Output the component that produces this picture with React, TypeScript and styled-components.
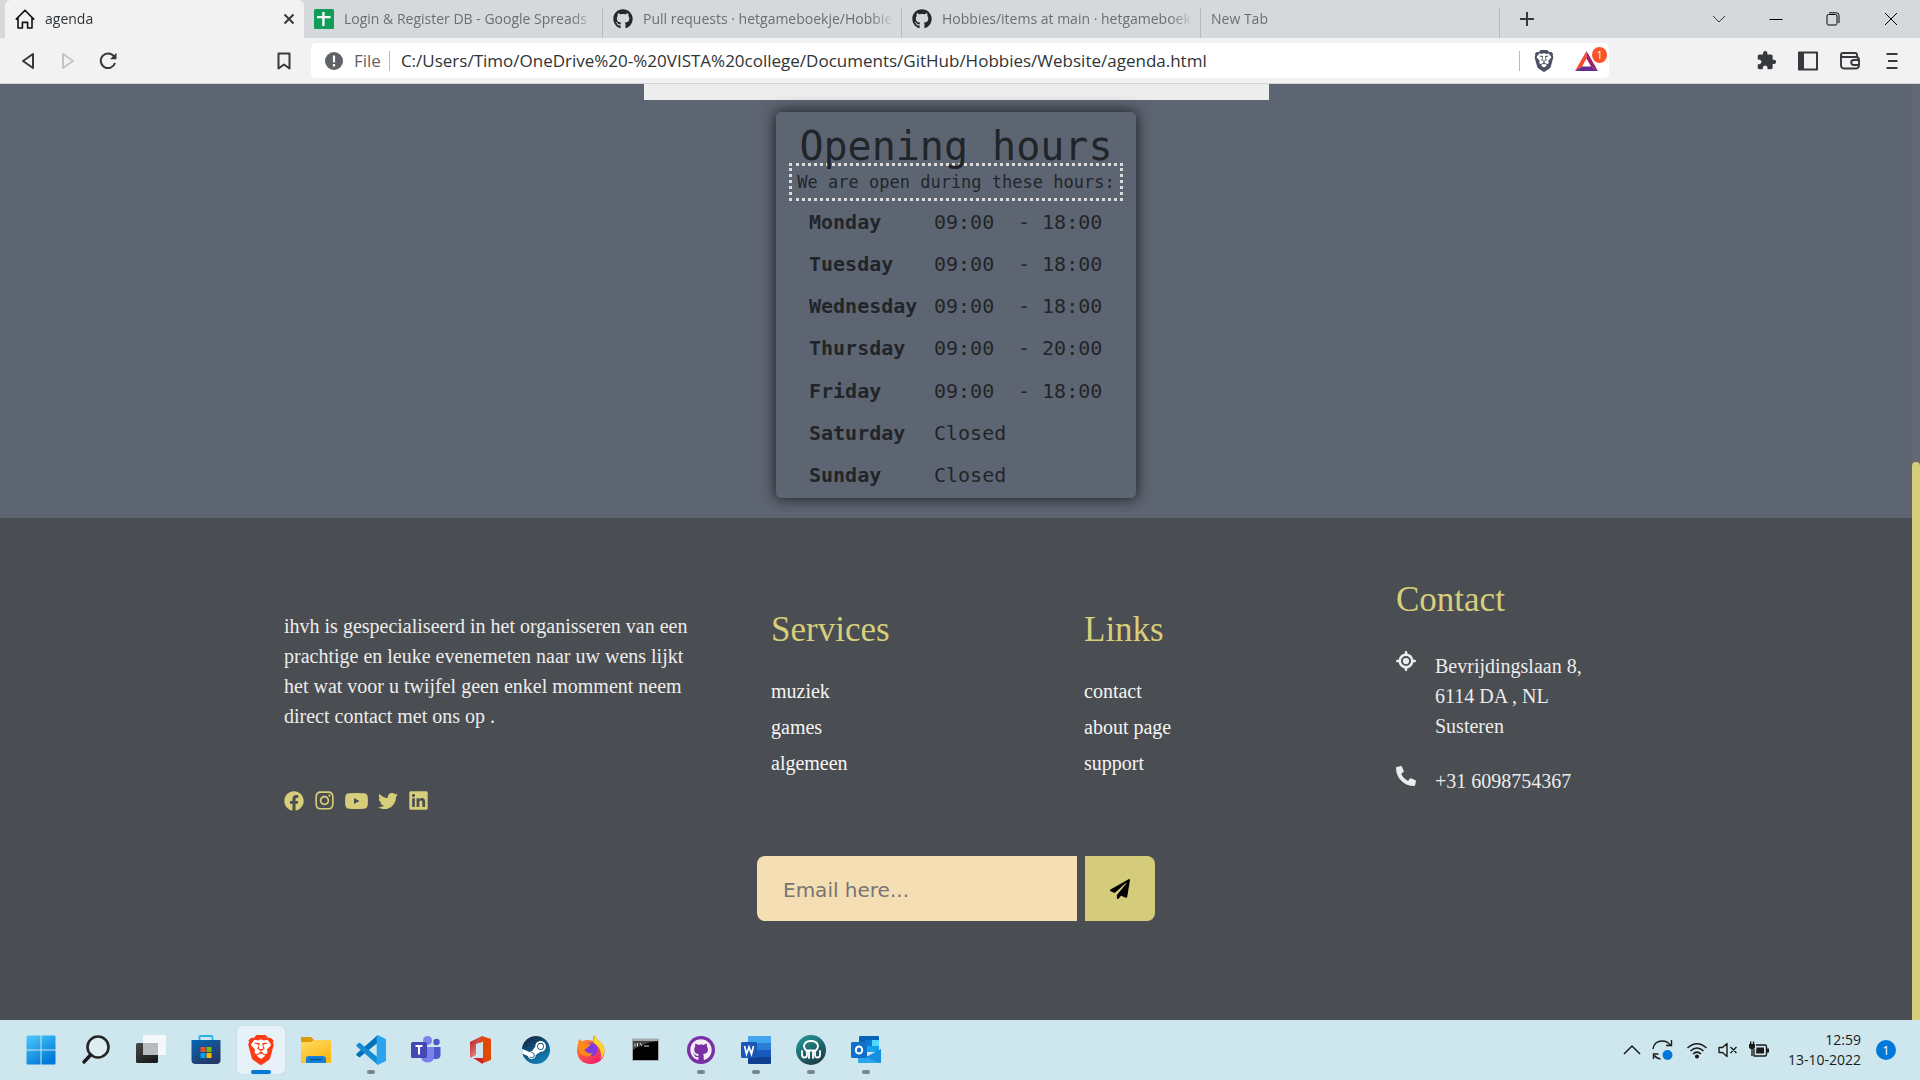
import React from 'react';
import styled, { createGlobalStyle, css } from 'styled-components';
import {
  FaFacebook,
  FaInstagram,
  FaTwitter,
  FaLinkedin,
  FaPaperPlane,
  FaGithub,
  FaSteam,
  FaPhoneAlt,
} from 'react-icons/fa';
import { FaLocationCrosshairs } from 'react-icons/fa6';
import { MdExtension } from 'react-icons/md';
import { SiBrave } from 'react-icons/si';

const sans = `"Open Sans", "Noto Sans", sans-serif`;
const serif = `"Liberation Serif", "Times New Roman", serif`;
const mono = `"DejaVu Sans Mono", monospace`;
const gold = '#d6ce7b';
const ink = '#35393d';

const GlobalStyle = createGlobalStyle`
  *, *::before, *::after { box-sizing: border-box; }
  body { margin: 0; background: #4a4d51; }
  h1, h2, p, ul { margin: 0; padding: 0; }
  ul { list-style: none; }
  button { border: 0; padding: 0; background: none; font: inherit; color: inherit; cursor: pointer; }
  svg { display: block; flex: none; }
`;

const Desktop = styled.div`
  display: flex;
  flex-direction: column;
  min-height: 100vh;
  font-family: ${sans};
`;

/* ---------- browser chrome ---------- */

const TabStrip = styled.div`
  display: flex;
  align-items: stretch;
  height: 38px;
  padding-left: 5px;
  background: #d5d9dc;
`;

const Tab = styled.div<{ $active?: boolean }>`
  display: flex;
  align-items: center;
  gap: 10px;
  flex: 0 1 299px;
  min-width: 0;
  padding: 0 6px 0 10px;
  font-size: 14px;
  color: #6a6f74;
  border-right: 1px solid transparent;
  border-image: linear-gradient(transparent 9px, #b5b9bc 9px) 1;
  ${(p) =>
    p.$active &&
    css`
      background: #f2f2f2;
      color: #2f3337;
      border: 0;
      border-image: none;
      border-radius: 6px 6px 0 0;
      padding-right: 9px;
    `}
`;

const TabTitle = styled.span`
  flex: 1;
  overflow: hidden;
  white-space: nowrap;
  line-height: 20px;
  mask-image: linear-gradient(to left, transparent, #000 24px);
`;

const IconButton = styled.button<{ $w?: number }>`
  display: flex;
  align-items: center;
  justify-content: center;
  width: ${(p) => p.$w ?? 40}px;
  color: ${ink};
`;

const CloseTab = styled(IconButton)`
  width: 12px;
`;

const WindowControls = styled.div`
  display: flex;
  margin-left: auto;
`;

const Toolbar = styled.div`
  display: flex;
  align-items: center;
  height: 46px;
  background: #f2f2f2;
  border-bottom: 1px solid #d2d4d6;
`;

const NavGroup = styled.nav`
  display: flex;
  width: 311px;
  padding: 0 7px 0 8px;
`;

const BookmarkButton = styled(IconButton)`
  margin-left: auto;
`;

const AddressBar = styled.div`
  display: flex;
  align-items: center;
  flex: 1;
  height: 35px;
  padding: 0 11px 0 14px;
  border-radius: 5px;
  background: #fff;
  color: #5f6368;
  font-size: 17px;
`;

const Scheme = styled.span`
  padding: 0 8px 0 11px;
`;

const Divider = styled.span`
  width: 1px;
  height: 20px;
  background: #b9bcbf;
`;

const AddressInput = styled.input`
  flex: 1;
  min-width: 0;
  height: 30px;
  margin-left: 11px;
  padding: 0;
  border: 0;
  outline: 0;
  background: none;
  font: 17px ${sans};
  color: #303336;
`;

const RewardButton = styled.button`
  position: relative;
  margin-left: 20px;
`;

const RewardCount = styled.span`
  position: absolute;
  top: -4px;
  right: -9px;
  width: 15px;
  height: 16px;
  border-radius: 50%;
  background: #fb542b;
  color: #fff;
  font-size: 10px;
  line-height: 16px;
  text-align: center;
`;

const ShieldButton = styled.button`
  margin-left: 13px;
  color: #4c5064;
`;

const ToolGroup = styled.div`
  display: flex;
  justify-content: flex-end;
  width: 311px;
  padding-right: 7px;
`;

/* ---------- web page ---------- */

const Viewport = styled.div`
  display: flex;
  flex: 1;
`;

const Page = styled.div`
  display: flex;
  flex-direction: column;
  flex: 1;
  min-width: 0;
`;

const ScrollTrack = styled.div`
  display: grid;
  grid-template-rows: 378fr 558fr;
  width: 8px;
  background: #646872;
`;

const ScrollThumb = styled.div`
  grid-row: 2;
  border-radius: 5px 5px 0 0;
  background: ${gold};
`;

const Main = styled.main`
  display: flex;
  flex-direction: column;
  align-items: center;
  gap: 12px;
  padding-bottom: 20px;
  background: #5e6572;
`;

const CalendarEdge = styled.div`
  width: 625px;
  height: 16px;
  background: #ededed;
`;

const HoursCard = styled.section`
  width: 360px;
  padding: 18px 13px 2px;
  border-radius: 5px;
  box-shadow: 0 0 14px 1px #1d1f22;
  background: #5e6572;
  color: #212529;
  font-family: ${mono};
`;

const HoursTitle = styled.h1`
  font-size: 40px;
  font-weight: 400;
  line-height: 33px;
  text-align: center;
`;

const HoursNote = styled.p`
  height: 38px;
  border: 3px dotted #dcdcdc;
  font-size: 17px;
  line-height: 32px;
  text-align: center;
  white-space: nowrap;
`;

const HoursTable = styled.table`
  width: 305px;
  height: 295px;
  margin: 0 auto 0 20px;
  border-collapse: collapse;
  font-size: 20px;
  line-height: 30px;

  th, td { padding: 0; text-align: left; white-space: nowrap; }
  th { width: 125px; }
  td + td { width: 96px; }
`;

const Footer = styled.footer`
  flex: 1;
  padding: 60px 24px 96px;
  background: #4a4d51;
  color: #ececec;
  font: 20px/30px ${serif};
`;

const FooterGrid = styled.div`
  display: grid;
  grid-template-columns: 487fr 313fr 312fr 232fr;
  max-width: 1344px;
  margin: 0 auto;
`;

const About = styled.section`
  padding: 33px 72px 0 0;
`;

const LinkColumn = styled.section`
  padding-top: 30px;
`;

const FooterHeading = styled.h2`
  color: ${gold};
  font-size: 35px;
  font-weight: 400;
  line-height: 44px;
`;

const LinkList = styled.ul`
  display: flex;
  flex-direction: column;
  gap: 6px;
  margin-top: 24px;
`;

const FooterLink = styled.a`
  color: #f5f5f5;
  text-decoration: none;
`;

const SocialRow = styled.div`
  display: flex;
  align-items: center;
  gap: 10px;
  height: 21px;
  margin-top: 59px;
`;

const SocialLink = styled.a`
  color: ${gold};
`;

const ContactList = styled.ul`
  display: flex;
  flex-direction: column;
  gap: 25px;
  margin-top: 29px;
`;

const ContactItem = styled.li`
  display: flex;
  gap: 19px;
`;

const ContactText = styled.span`
  max-width: 160px;
`;

const Newsletter = styled.form`
  display: flex;
  justify-content: center;
  gap: 8px;
  margin-top: 45px;
`;

const EmailInput = styled.input`
  width: 320px;
  height: 65px;
  padding: 2px 26px 0;
  border: 0;
  border-radius: 8px 0 0 8px;
  background: #f5deb3;
  color: #333;
  font: 20px "DejaVu Sans", sans-serif;
  &::placeholder { color: #757575; opacity: 1; }
`;

const SendButton = styled.button`
  display: flex;
  align-items: center;
  justify-content: center;
  width: 70px;
  height: 65px;
  border-radius: 0 8px 8px 0;
  background: #d4cc7b;
  color: #000;
`;

/* ---------- taskbar ---------- */

const Taskbar = styled.div`
  display: flex;
  align-items: center;
  justify-content: space-between;
  height: 60px;
  padding: 0 24px 0 13px;
  background: #cee6ed;
  color: #1b1b1b;
`;

const AppRow = styled.div`
  display: flex;
  gap: 7px;
  padding-left: 4px;
`;

const AppButton = styled.button<{ $state?: 'active' | 'open' }>`
  display: flex;
  align-items: center;
  justify-content: center;
  position: relative;
  width: 48px;
  height: 48px;
  border-radius: 5px;
  ${(p) => p.$state === 'active' && css`background: #e6f2f7; box-shadow: 0 0 1px #9fb5bd;`}
  ${(p) =>
    p.$state &&
    css`
      &::after {
        content: '';
        position: absolute;
        bottom: 0;
        width: ${p.$state === 'active' ? 20 : 8}px;
        height: 4px;
        border-radius: 2px;
        background: ${p.$state === 'active' ? '#0078d7' : '#7a868b'};
      }
    `}
`;

const Tray = styled.div`
  display: flex;
  align-items: center;
  gap: 12px;
`;

const TrayIcons = styled.div`
  display: flex;
  align-items: center;
  gap: 11px;
`;

const Clock = styled.time`
  width: 80px;
  font-size: 14px;
  line-height: 20px;
  text-align: right;
`;

const NoticeCount = styled.span`
  width: 20px;
  height: 20px;
  margin-left: 3px;
  border-radius: 50%;
  background: #0078d7;
  color: #fff;
  font-size: 13px;
  line-height: 20px;
  text-align: center;
`;

/* ---------- drawings ---------- */

type LineProps = { w?: number; h?: number; box: string; sw?: number; color?: string; children: React.ReactNode };
const Line = ({ w = 20, h = 20, box, sw = 2, color = 'currentColor', children }: LineProps) => (
  <svg width={w} height={h} viewBox={box} fill="none" stroke={color} strokeWidth={sw} strokeLinejoin="round" aria-hidden="true">
    {children}
  </svg>
);

const HomeIcon = () => (
  <Line box="0 0 20 20" sw={1.6} color="#111">
    <path d="M.8 10.6 10 1.2l9.2 9.4M3 9v10h4.4v-5.6h5.2V19H17V9" />
  </Line>
);

const SheetsIcon = () => (
  <svg width="20" height="20" viewBox="0 0 20 20" aria-hidden="true">
    <rect width="20" height="20" rx="1.5" fill="#0f9d58" />
    <path d="M8.2 3h2.4v4h6v2.2h-6V17H8.2V9.200H3V7h5.200z" fill="#fff" />
  </svg>
);

const BatIcon = () => (
  <svg width="23" height="20" viewBox="0 0 23 20" aria-hidden="true">
    <path d="M11.500 0 0 20l7-4.500 4.500-8z" fill="#ff4724" />
    <path d="M11.500 0 23 20l-7-4.500-4.500-8z" fill="#9e1f63" />
    <path d="M0 20h23l-7-4.500H7z" fill="#662d91" />
  </svg>
);

const YoutubeIcon = () => (
  <svg width="23" height="16" viewBox="0 0 23 16" fill="currentColor" fillRule="evenodd" aria-hidden="true">
    <path d="M4 .3Q11.500-.3 19 .3 22.300.4 22.700 4q.4 4 0 8-.4 3.600-3.700 3.700-7.500.6-15 0Q.7 15.600.3 12q-.4-4 0-8Q.7.4 4 .3ZM9 5v6L14.400 8Z" />
  </svg>
);

const App30 = ({ children }: { children: React.ReactNode }) => (
  <svg width="30" height="30" viewBox="0 0 30 30" aria-hidden="true">{children}</svg>
);

const Gradient = ({ id, from, to }: { id: string; from: string; to: string }) => (
  <linearGradient id={id} x1="0" y1="0" x2="0.6" y2="1">
    <stop stopColor={from} />
    <stop offset="1" stopColor={to} />
  </linearGradient>
);

const apps: { name: string; state?: 'active' | 'open'; art: React.ReactNode }[] = [
  {
    name: 'Start',
    art: (
      <>
        <Gradient id="win" from="#4ccbfb" to="#0078d7" />
        <path fill="url(#win)" d="M.5 1.500q0-1 1-1h13v14H.5zM15.500.5h13q1 0 1 1v13h-14zM.5 15.500h14v14h-13q-1 0-1-1zM15.500 15.500h14v13q0 1-1 1h-13z" />
      </>
    ),
  },
  {
    name: 'Search',
    art: (
      <>
        <circle cx="17" cy="12" r="10.500" fill="#dfeef3" stroke="#262626" strokeWidth="2.600" />
        <path d="m9.500 20-6.500 7" stroke="#1d1d1d" strokeWidth="3.400" strokeLinecap="round" />
      </>
    ),
  },
  {
    name: 'Task view',
    art: (
      <>
        <Gradient id="tv" from="#4a4a4a" to="#1c1c1c" />
        <rect y="8" width="22" height="20" rx="1.500" fill="url(#tv)" />
        <rect x="7" y="0" width="23" height="20" rx="1.500" fill="#f5f7f8" />
        <path d="M7 8h15v12H8q-1 0-1-1z" fill="#b9bbbc" />
      </>
    ),
  },
  {
    name: 'Microsoft Store',
    art: (
      <>
        <Gradient id="store" from="#0667b5" to="#25386a" />
        <path d="M8.500 5V2q0-1 1-1h11q1 0 1 1v3" fill="none" stroke="#22b6ee" strokeWidth="1.800" />
        <path d="M.5 5h29v20q0 4-4 4h-21q-4 0-4-4z" fill="url(#store)" />
        <path d="M9.500 12h5v5h-5z" fill="#f25022" />
        <path d="M15.500 12h5v5h-5z" fill="#7fba00" />
        <path d="M9.500 18h5v5h-5z" fill="#00a4ef" />
        <path d="M15.500 18h5v5h-5z" fill="#ffb900" />
      </>
    ),
  },
  {
    name: 'Brave',
    state: 'active',
    art: (
      <>
        <path d="M7 4h16l2 6-2 10-8 7-8-7-2-10z" fill="#fff" />
        <SiBrave size={30} color="#fb3c14" />
      </>
    ),
  },
  {
    name: 'File Explorer',
    art: (
      <>
        <Gradient id="folder" from="#ffdb63" to="#fbb917" />
        <path d="M0 3q0-1 1-1h9l3 3v4H0z" fill="#dd9a07" />
        <path d="M0 7h10l3-2h16q1 0 1 1v22H0z" fill="url(#folder)" />
        <path d="M5 28v-4q0-3 3-3h14q3 0 3 3v4z" fill="#1580d4" />
        <path d="M9 24.500h12" stroke="#0b559c" strokeWidth="1.500" />
      </>
    ),
  },
  {
    name: 'Visual Studio Code',
    state: 'open',
    art: (
      <>
        <path d="M22 7.500 3.500 22.500.8 20.600q-1-1 0-2L21.500.3z" fill="#0073b7" />
        <path d="M22 22.500 3.500 7.500.8 9.400q-1 1 0 2L21.500 29.700z" fill="#168bd3" />
        <path d="M21.500 0 29 3.500q1 .5 1 1.500v20q0 1-1 1.500L21.500 30q-.8-.2-.8-1.500v-27Q20.700.2 21.500 0z" fill="#2aa4ef" />
      </>
    ),
  },
  {
    name: 'Microsoft Teams',
    art: (
      <>
        <circle cx="16.500" cy="5.500" r="4.500" fill="#7b83eb" />
        <circle cx="25.500" cy="7" r="3.200" fill="#5059c9" />
        <path d="M21 12h8.500v8q0 4-4.500 4h-4z" fill="#5059c9" />
        <path d="M10 12h13v9q0 6.500-6.500 6.500T10 21z" fill="#7b83eb" />
        <rect x="0" y="7" width="16" height="16" rx="1.500" fill="#4248b4" />
        <path d="M4.500 11h7M8 11v8.500" stroke="#fff" strokeWidth="2" />
      </>
    ),
  },
  {
    name: 'Office',
    art: (
      <>
        <Gradient id="office" from="#b5150e" to="#e88f96" />
        <path d="M4 7 16 1v6l-6 2v11l-6 3z" fill="url(#office)" />
        <path d="m16 1 9 3v21l-9 3.500-8-5.500 9 1V6.500L13 8z" fill="#e04a09" />
        <path d="M7 23h10v5.500h-1z" fill="#cf242a" />
      </>
    ),
  },
  {
    name: 'Steam',
    art: (
      <>
        <circle cx="15" cy="15" r="13" fill="#fff" />
        <Gradient id="steam" from="#111d3a" to="#1380b6" />
        <FaSteam x={0.5} y={0.5} size={29} fill="url(#steam)" />
      </>
    ),
  },
  {
    name: 'Firefox',
    art: (
      <>
        <Gradient id="fox" from="#ffa21a" to="#f3206b" />
        <path d="M17 2q2-2 2-2 .5 3 4 6 6 5 5.500 11Q27 28.500 15 29 2 28.500 1 16q0-5 1.500-8.500L3 4l3 2.500Q11 4 17 6z" fill="url(#fox)" />
        <path d="M19 0q.5 3 4 6 6 5 5.500 11-1 5-4 7.500Q27 14 19 9q-3-3 0-9z" fill="#ffd32b" />
        <circle cx="15" cy="14.500" r="6.800" fill="#8139e0" />
        <path d="M3 4q2 3 5 4l7 1-4 4-3 2q5 5 9 3-5 7-13 0Q1 12 3 4z" fill="#ff8b16" />
      </>
    ),
  },
  {
    name: 'Command Prompt',
    art: (
      <>
        <rect x="1" y="3.500" width="27" height="22.500" rx="1" fill="#a3a9ac" />
        <path d="M2 6h25v19H2z" fill="#000" />
        <path d="M2 6h25Q12 8 2 15z" fill="#454545" />
        <path d="M4 8.500v3M6.500 8v3.500M9 8l2 3M13 11h5" stroke="#ddd" />
      </>
    ),
  },
  {
    name: 'GitHub Desktop',
    state: 'open',
    art: (
      <>
        <circle cx="15" cy="15" r="14" fill="#7a2fa5" />
        <FaGithub x={4} y={4} size={22} color="#f3eef6" />
      </>
    ),
  },
  {
    name: 'Word',
    state: 'open',
    art: (
      <>
        <path d="M7 2q0-1 1-1h21q1 0 1 1v6H7z" fill="#41a5ee" />
        <path d="M7 8h23v7H7z" fill="#2b7cd3" />
        <path d="M7 15h23v7H7z" fill="#185abd" />
        <path d="M7 22h23v6q0 1-1 1H8q-1 0-1-1z" fill="#103f91" />
        <rect y="7" width="16" height="16" rx="1.500" fill="#1a57b5" />
        <path d="m3.500 11 2 8L8 12l2.500 7 2-8" fill="none" stroke="#fff" strokeWidth="1.700" />
      </>
    ),
  },
  {
    name: 'GitKraken',
    state: 'open',
    art: (
      <>
        <Gradient id="kraken" from="#24a09b" to="#1c3f4b" />
        <circle cx="15" cy="15" r="15" fill="url(#kraken)" />
        <path d="M10.500 15.500Q8 14 8 10.500 9 6 15 6t7 4.500q0 3.500-2.500 5M10 15.500h10M6 16v4q0 2.500 2.500 2.500T11 20v-4M13 16.500V23M17 16.500V23M19 16v4q0 2.500 2.500 2.500T24 20v-4" fill="none" stroke="#fff" strokeWidth="1.800" strokeLinecap="round" />
      </>
    ),
  },
  {
    name: 'Outlook',
    state: 'open',
    art: (
      <>
        <path d="M8 2q0-1 1-1h18q1 0 1 1v15H8z" fill="#0364b8" />
        <path d="M14 5h7v6h-7z" fill="#0f78d4" />
        <path d="M21 5h7v6h-7z" fill="#50d9ff" />
        <path d="M14 11h14v6H14z" fill="#14a1e8" />
        <path d="m7 17 12 5 11-8v13q0 1-1 1H8q-1 0-1-1z" fill="#28a8ea" />
        <path d="m30 14-15 8 13 6q2 0 2-1z" fill="#1490df" />
        <rect y="7" width="16" height="16" rx="1.500" fill="#0f6fc9" />
        <ellipse cx="8" cy="15" rx="3.200" ry="3.600" fill="none" stroke="#fff" strokeWidth="2" />
      </>
    ),
  },
];

const tabs = [
  { title: 'Login & Register DB - Google Spreads', icon: <SheetsIcon /> },
  { title: 'Pull requests · hetgameboekje/Hobbie', icon: <FaGithub size={20} color="#24292f" /> },
  { title: 'Hobbies/items at main · hetgameboek', icon: <FaGithub size={20} color="#24292f" /> },
  { title: 'New Tab', icon: null },
];

const hours: [string, string, string?][] = [
  ['Monday', '09:00', '- 18:00'],
  ['Tuesday', '09:00', '- 18:00'],
  ['Wednesday', '09:00', '- 18:00'],
  ['Thursday', '09:00', '- 20:00'],
  ['Friday', '09:00', '- 18:00'],
  ['Saturday', 'Closed'],
  ['Sunday', 'Closed'],
];

const socials = [
  { name: 'Facebook', icon: <FaFacebook size={20} /> },
  { name: 'Instagram', icon: <FaInstagram size={21} width={19} /> },
  { name: 'YouTube', icon: <YoutubeIcon /> },
  { name: 'Twitter', icon: <FaTwitter size={20} /> },
  { name: 'LinkedIn', icon: <FaLinkedin size={21} width={19} /> },
];

const Links = ({ title, items }: { title: string; items: string[] }) => (
  <LinkColumn>
    <FooterHeading>{title}</FooterHeading>
    <LinkList>
      {items.map((item) => (
        <li key={item}><FooterLink href="#">{item}</FooterLink></li>
      ))}
    </LinkList>
  </LinkColumn>
);

const BrowserChrome = () => (
  <header>
    <TabStrip>
      <Tab $active>
        <HomeIcon />
        <TabTitle>agenda</TabTitle>
        <CloseTab aria-label="Close tab">
          <Line w={12} h={12} box="0 0 12 12"><path d="m1.500 1.500 9 9m0-9-9 9" /></Line>
        </CloseTab>
      </Tab>
      {tabs.map((tab) => (
        <Tab key={tab.title}>
          {tab.icon}
          <TabTitle>{tab.title}</TabTitle>
        </Tab>
      ))}
      <IconButton $w={54} aria-label="New tab">
        <Line w={16} h={16} box="0 0 16 16"><path d="M8 1v14M1 8h14" /></Line>
      </IconButton>
      <WindowControls>
        <IconButton $w={57} aria-label="Search tabs">
          <Line w={14} h={14} box="0 0 14 14" sw={1}><path d="m1 4 6 6 6-6" /></Line>
        </IconButton>
        <IconButton $w={57} aria-label="Minimize">
          <Line w={14} h={14} box="0 0 14 14" sw={1} color="#000"><path d="M.5 7.500h13" /></Line>
        </IconButton>
        <IconButton $w={57} aria-label="Restore">
          <Line w={14} h={14} box="0 0 14 14" sw={1} color="#000">
            <rect x="1" y="2.500" width="10" height="10.500" rx="1.500" />
            <path d="M3 .8h7.500q2.500 0 2.500 2.500V11" />
          </Line>
        </IconButton>
        <IconButton $w={59} aria-label="Close window">
          <Line w={14} h={14} box="0 0 14 14" sw={1} color="#000"><path d="m1 1 12 12m0-12L1 13" /></Line>
        </IconButton>
      </WindowControls>
    </TabStrip>
    <Toolbar>
      <NavGroup>
        <IconButton aria-label="Back">
          <Line w={16} h={18} box="0 0 16 18"><path d="M13 2v14L3 9z" /></Line>
        </IconButton>
        <IconButton aria-label="Forward">
          <Line w={16} h={18} box="0 0 16 18" color="#c2c4c6"><path d="M3 2v14l10-7z" /></Line>
        </IconButton>
        <IconButton aria-label="Reload">
          <Line w={18} h={18} box="0 0 18 18">
            <path d="M15 4.500A7.300 7.300 0 1 0 16 11" />
            <path d="M17.500.8v6.400H11z" fill={ink} stroke="none" />
          </Line>
        </IconButton>
        <BookmarkButton aria-label="Bookmark">
          <Line w={14} h={18} box="0 0 14 18"><path d="M1.500 1.500h11v15L7 12.500l-5.500 4z" /></Line>
        </BookmarkButton>
      </NavGroup>
      <AddressBar>
        <svg width="18" height="18" viewBox="0 0 18 18" aria-hidden="true">
          <circle cx="9" cy="9" r="9" fill="#5f6368" />
          <path d="M9 3.500v6.800M9 12v2.400" stroke="#fff" strokeWidth="2.200" />
        </svg>
        <Scheme>File</Scheme>
        <Divider />
        <AddressInput
          aria-label="Address"
          defaultValue="C:/Users/Timo/OneDrive%20-%20VISTA%20college/Documents/GitHub/Hobbies/Website/agenda.html"
        />
        <Divider />
        <ShieldButton aria-label="Brave Shields"><SiBrave size={22} /></ShieldButton>
        <RewardButton aria-label="Brave Rewards">
          <BatIcon />
          <RewardCount>1</RewardCount>
        </RewardButton>
      </AddressBar>
      <ToolGroup>
        <IconButton $w={42} aria-label="Extensions"><MdExtension size={21} /></IconButton>
        <IconButton $w={42} aria-label="Sidebar">
          <Line box="0 0 20 20"><rect x="1" y="1.500" width="18" height="17" /><path d="M4 1v18" strokeWidth="4" /></Line>
        </IconButton>
        <IconButton $w={42} aria-label="Wallet">
          <Line box="0 0 20 20" sw={1.9}>
            <path d="M1 4v10q0 3.500 3.500 3.500h11q3.500 0 3.500-3.500V9q0-3-3-3H3Q1 6 1 4t2-2h12q2 0 2 2v2M19 9h-5q-2.800 0-2.800 2.500T14 14h5" />
          </Line>
        </IconButton>
        <IconButton $w={42} aria-label="Menu">
          <Line w={14} h={18} box="0 0 14 18"><path d="M1.500 2h11M3 9h9.500M1.500 16h11" /></Line>
        </IconButton>
      </ToolGroup>
    </Toolbar>
  </header>
);

export default function App() {
  return (
    <Desktop>
      <GlobalStyle />
      <BrowserChrome />
      <Viewport>
        <Page>
          <Main>
            <CalendarEdge />
            <HoursCard>
              <HoursTitle>Opening hours</HoursTitle>
              <HoursNote>We are open during these hours:</HoursNote>
              <HoursTable>
                <tbody>
                  {hours.map(([day, from, to]) => (
                    <tr key={day}>
                      <th scope="row">{day}</th>
                      <td>{from}</td>
                      <td>{to}</td>
                    </tr>
                  ))}
                </tbody>
              </HoursTable>
            </HoursCard>
          </Main>
          <Footer>
            <FooterGrid>
              <About>
                <p>
                  ihvh is gespecialiseerd in het organisseren van een prachtige en leuke evenemeten naar uw wens
                  lijkt het wat voor u twijfel geen enkel momment neem direct contact met ons op .
                </p>
                <SocialRow>
                  {socials.map((s) => (
                    <SocialLink key={s.name} href="#" aria-label={s.name}>{s.icon}</SocialLink>
                  ))}
                </SocialRow>
              </About>
              <Links title="Services" items={['muziek', 'games', 'algemeen']} />
              <Links title="Links" items={['contact', 'about page', 'support']} />
              <section>
                <FooterHeading>Contact</FooterHeading>
                <ContactList>
                  <ContactItem>
                    <FaLocationCrosshairs size={20} />
                    <ContactText>Bevrijdingslaan 8, 6114 DA , NL Susteren</ContactText>
                  </ContactItem>
                  <ContactItem>
                    <FaPhoneAlt size={20} />
                    <ContactText>+31 6098754367</ContactText>
                  </ContactItem>
                </ContactList>
              </section>
            </FooterGrid>
            <Newsletter onSubmit={(e) => e.preventDefault()}>
              <EmailInput type="email" placeholder="Email here..." aria-label="Email" />
              <SendButton type="submit" aria-label="Subscribe"><FaPaperPlane size={20} /></SendButton>
            </Newsletter>
          </Footer>
        </Page>
        <ScrollTrack><ScrollThumb /></ScrollTrack>
      </Viewport>
      <Taskbar>
        <AppRow>
          {apps.map((app) => (
            <AppButton key={app.name} $state={app.state} aria-label={app.name}>
              <App30>{app.art}</App30>
            </AppButton>
          ))}
        </AppRow>
        <Tray>
          <TrayIcons>
            <Line w={18} box="0 0 18 20" sw={1.5}><path d="m1 14 8-8 8 8" /></Line>
            <svg width="22" height="22" viewBox="0 0 22 22" fill="none" stroke="#1b1b1b" strokeWidth="1.4" aria-hidden="true">
              <path d="M1 10Q2 2 10.500 2q5 0 8 4.500M19.500 1v5.500H14M1.500 20v-5h5M2.500 16.500q2 3 6 3.500" />
              <circle cx="15.500" cy="16" r="5" fill="#0078d7" stroke="none" />
            </svg>
            <Line w={22} box="-2 0 22 20" sw={1.5}>
              <path d="M.5 8q9.500-8.500 19 0M3.500 11q6.500-6 13 0M6 14q4-3.800 8 0" />
              <circle cx="10" cy="16.500" r="1.300" fill="currentColor" />
            </Line>
            <Line box="0 0 20 20" sw={1.4}>
              <path d="M1 7.500h3.500L9 3.500v13l-4.500-4H1zM12.500 7l6 6m0-6-6 6" />
            </Line>
            <Line box="0 0 20 20" sw={1.4}>
              <path d="M7 5h9q1.500 0 1.500 1.500v8q0 1.500-1.500 1.500H5V9" />
              <path d="M7.500 7.500H15v6H7zM18 8.500h2v4h-2zM0 4h6v3q0 2-3 2T0 7zM1 1.500h1.400V4H1zM3.800 1.500h1.400V4H3.800z" fill="currentColor" stroke="none" />
              <path d="M3 8v8" />
            </Line>
          </TrayIcons>
          <Clock dateTime="2022-10-13T12:59">12:59<br />13-10-2022</Clock>
          <NoticeCount>1</NoticeCount>
        </Tray>
      </Taskbar>
    </Desktop>
  );
}
